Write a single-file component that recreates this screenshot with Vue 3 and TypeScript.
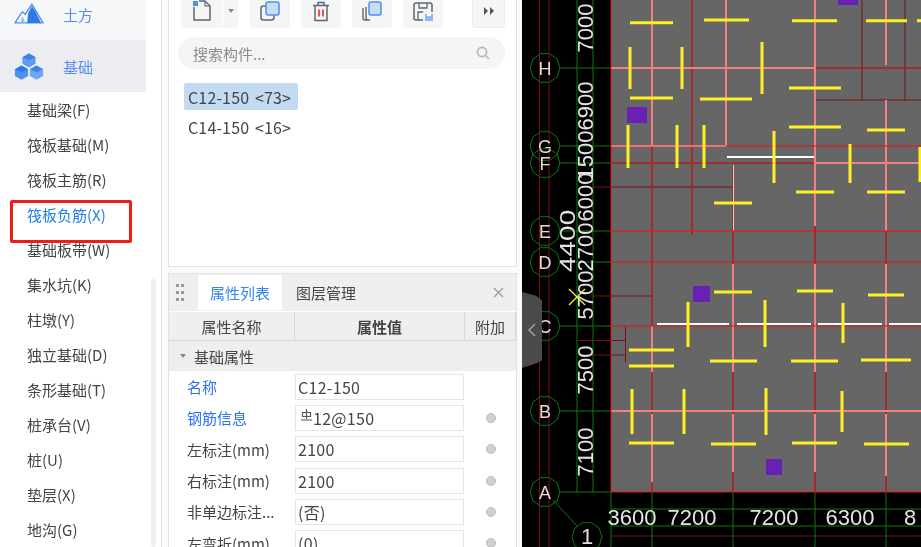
<script setup lang="ts">
type Row = { label: string; value: string; link?: boolean; dot?: boolean }

const menu = [
  '基础梁(F)', '筏板基础(M)', '筏板主筋(R)', '筏板负筋(X)', '基础板带(W)', '集水坑(K)', '柱墩(Y)',
  '独立基础(D)', '条形基础(T)', '桩承台(V)', '桩(U)', '垫层(X)', '地沟(G)',
]
const activeMenu = '筏板负筋(X)'

const rows: Row[] = [
  { label: '名称', value: 'C12-150', link: true },
  { label: '钢筋信息', value: '12@150', link: true, dot: true },
  { label: '左标注(mm)', value: '2100', dot: true },
  { label: '右标注(mm)', value: '2100', dot: true },
  { label: '非单边标注...', value: '(否)', dot: true },
  { label: '左弯折(mm)', value: '(0)', dot: true },
]

// drawing data in page px, the svg group shifts it by the canvas left edge
const X0 = 522
const hBars: number[][] = [
  [630, 673, 22.7], [704, 749, 20], [792, 837, 20.7], [866, 907, 20.7], [917, 921, 20.7],
  [789, 841, 88], [630, 673, 98], [700, 752, 99], [789, 841, 127], [867, 905, 130],
  [796, 834, 192], [867, 905, 192], [714, 752, 203], [714, 752, 292], [797, 833, 291],
  [868, 904, 295], [629, 674, 350], [629, 674, 366], [710, 757, 361], [791, 838, 361],
  [861, 911, 360], [629, 674, 443], [711, 756, 444], [792, 837, 443], [864, 909, 444],
]
const vBars: number[][] = [
  [630, 47, 89], [682, 47, 89], [762, 42, 94], [628, 125, 168], [677, 125, 168], [704, 125, 168],
  [774, 131, 183], [850, 144, 183], [920, 147, 182], [688, 302, 347], [765, 300, 347], [843, 303, 343],
  [632, 389, 434], [684, 389, 434], [766, 388, 435], [842, 391, 432],
]
const purple: number[][] = [[627, 107, 20, 16], [693, 286, 17, 16], [766, 459, 16, 16], [838, -4, 20, 9]]

const pink: number[][] = [
  [652, 0, 652, 146], [726, 0, 726, 146], [815, 0, 815, 226], [886, 0, 886, 65], [886, 100, 886, 231],
  [815, 163, 815, 226], [652, 326, 652, 372], [733, 264, 733, 372],
  [815, 264, 815, 372], [886, 264, 886, 372], [652, 414, 652, 482], [733, 414, 733, 472],
  [815, 414, 815, 472], [886, 414, 886, 476], [611, 68, 815, 68], [815, 163, 921, 163],
  [611, 411, 921, 411],
]
const paleLines: number[][] = [[611, 146, 726, 146]]
const red: number[][] = [
  [611, 146, 921, 146], [611, 231, 921, 231], [611, 262, 921, 262], [611, 326, 921, 326],
  [611, 492, 921, 492], [611, 0, 611, 492],
]
const darkRed: number[][] = [
  [692, 0, 692, 235], [652, 146, 652, 492], [733, 165, 733, 492], [815, 226, 815, 492],
  [886, 231, 886, 492], [611, 163, 815, 163], [815, 68, 921, 68],
]
const dimRed: number[][] = [
  [593, 187, 733, 187], [590, 296, 652, 296], [625.5, 326, 625.5, 363], [578, 340.5, 625, 340.5],
  [578, 355, 625, 355], [539.5, 0, 539.5, 547], [549, 0, 549, 547], [611, 536, 921, 536],
  [815, 100, 921, 100], [862, 0, 862, 100], [905, 0, 905, 100],
]
const green: number[][] = [
  [577, 0, 577, 492], [593, 0, 593, 492], [560, 68, 611, 68], [560, 146, 611, 146], [560, 163, 611, 163],
  [560, 231, 611, 231], [560, 262, 611, 262], [560, 326, 611, 326], [560, 411, 611, 411],
  [560, 492, 611, 492], [611, 492, 611, 547], [652, 492, 652, 547], [733, 492, 733, 547],
  [815, 492, 815, 547], [886, 492, 886, 547], [611, 509, 921, 509], [611, 526, 921, 526],
  [553, 500, 577, 526],
]
const axes: [string, number, number][] = [
  ['H', 545, 68], ['G', 545, 146], ['F', 545, 163], ['E', 545, 231], ['D', 545, 262],
  ['C', 545, 326], ['B', 545, 411], ['A', 545, 492], ['1', 587, 537],
]
const sideDims: [string, number, number][] = [
  ['7000', 593, 28], ['6900', 593, 106], ['1500', 593, 155], ['6000', 593, 197], ['2700', 593, 247],
  ['5700', 593, 295], ['7500', 593, 370], ['7100', 593, 452],
]
const bottomDims: [string, number][] = [['3600', 632], ['7200', 692], ['7200', 774], ['6300', 850], ['8', 910]]

function octagon(cx: number, cy: number, r = 15): string {
  const pts: string[] = []
  for (let i = 0; i < 10; i++) {
    const a = (Math.PI * 2 * i) / 10
    pts.push(`${(cx + r * Math.cos(a)).toFixed(1)},${(cy + r * Math.sin(a)).toFixed(1)}`)
  }
  return pts.join(' ')
}
</script>

<template>
  <div class="page">
    <aside class="sidebar">
      <div class="cat cat-top">
        <svg class="cat-icon" width="30" height="23" viewBox="0 0 32 24">
          <path d="M1 22 L9 10 L12 13 L19 2 L31 22 Z" fill="none" stroke="#4d90f0" stroke-width="1.4" stroke-linejoin="round" />
          <path d="M14 22 L15 12 L19 4 L23 10 L29 22 Z" fill="#2f7ae5" />
          <path d="M7 22 L9 15 L12 22 Z" fill="#8db9f5" />
        </svg>
        <span>土方</span>
      </div>
      <div class="cat cat-active">
        <svg class="cat-icon" width="30" height="29" viewBox="0 0 32 30">
          <path d="M16 1 L23 5 L23 12 L16 16 L9 12 L9 5 Z" fill="#5d9cf2" />
          <path d="M16 8 L23 5 L16 1 L9 5 Z" fill="#3b82ea" />
          <path d="M8 14 L15 18 L15 25 L8 29 L1 25 L1 18 Z" fill="#4e92ef" />
          <path d="M8 21 L15 18 L8 14 L1 18 Z" fill="#2f7ae5" />
          <path d="M24 14 L31 18 L31 25 L24 29 L17 25 L17 18 Z" fill="#6ea8f4" />
          <path d="M24 21 L31 18 L24 14 L17 18 Z" fill="#3b82ea" />
        </svg>
        <span>基础</span>
      </div>
      <ul class="menu">
        <li v-for="item in menu" :key="item" :class="{ active: item === activeMenu }">{{ item }}</li>
      </ul>
      <div class="red-box"></div>
      <div class="scroll-thumb"></div>
    </aside>

    <main class="middle">
      <section class="list-panel">
        <div class="toolbar">
          <div class="tool-group">
            <button class="tool tool-new">
              <svg width="20" height="22" viewBox="0 0 20 22">
                <path d="M2 7 V20 H18 V6 L13 1 H7" fill="none" stroke="#5f6672" stroke-width="1.5" stroke-linejoin="round" />
                <path d="M13 1 V6 H18" fill="none" stroke="#5f6672" stroke-width="1.2" />
                <rect x="1" y="1" width="5" height="5" fill="#4d90f0" />
              </svg>
            </button>
            <button class="tool tool-drop"><i class="caret"></i></button>
          </div>
          <button class="tool">
            <svg width="20" height="20" viewBox="0 0 20 20">
              <rect x="1" y="5" width="13" height="14" rx="2.5" fill="none" stroke="#5f6672" stroke-width="1.5" />
              <rect x="6" y="1" width="13" height="13" rx="2" fill="#c9dcf5" stroke="#4d90f0" stroke-width="1.5" />
            </svg>
          </button>
          <button class="tool">
            <svg width="18" height="21" viewBox="0 0 18 21">
              <path d="M1 4.5 H17 M6 4 V1.5 H12 V4 M3 5 V19.5 H15 V5" fill="none" stroke="#5f6672" stroke-width="1.5" stroke-linejoin="round" />
              <path d="M7 8.5 V15.5 M11 8.5 V15.5" stroke="#e5393b" stroke-width="1.7" />
            </svg>
          </button>
          <button class="tool">
            <svg width="20" height="20" viewBox="0 0 20 20">
              <path d="M5 19 H3 Q1 19 1 17 V7" fill="none" stroke="#5f6672" stroke-width="1.4" />
              <path d="M8 19 H6 Q4 19 4 17 V6" fill="none" stroke="#5f6672" stroke-width="1.4" />
              <rect x="7" y="1" width="12" height="13" rx="2" fill="#c9dcf5" stroke="#4d90f0" stroke-width="1.5" />
            </svg>
          </button>
          <button class="tool">
            <svg width="20" height="20" viewBox="0 0 20 20">
              <path d="M10 19 H3 Q1 19 1 17 V4 Q1 2 3 2 H17 Q19 2 19 4 V11" fill="none" stroke="#5f6672" stroke-width="1.5" />
              <path d="M6 2 V7 H14 V2 M5 19 V11 H10" fill="none" stroke="#5f6672" stroke-width="1.3" />
              <rect x="12" y="13" width="8" height="7" fill="#8db9f5" />
              <rect x="14" y="13" width="4" height="2" fill="#fff" />
            </svg>
          </button>
          <button class="tool tool-more">
            <svg width="10" height="8" viewBox="0 0 10 8"><path d="M0 0 L4 4 L0 8 Z M6 0 L10 4 L6 8 Z" fill="#555" /></svg>
          </button>
        </div>
        <div class="search">
          <span>搜索构件...</span>
          <svg width="14" height="14" viewBox="0 0 14 14">
            <circle cx="6" cy="6" r="4.6" fill="none" stroke="#b5b5b5" stroke-width="1.6" />
            <path d="M9.5 9.5 L13 13" stroke="#b5b5b5" stroke-width="1.6" />
          </svg>
        </div>
        <div class="item selected">C12-150 &lt;73&gt;</div>
        <div class="item">C14-150 &lt;16&gt;</div>
      </section>

      <section class="prop-panel">
        <div class="tabs">
          <svg class="grip" width="8" height="18" viewBox="0 0 8 18">
            <g fill="#9a9a9a">
              <rect x="0" y="0" width="3" height="3" /><rect x="5" y="0" width="3" height="3" />
              <rect x="0" y="7" width="3" height="3" /><rect x="5" y="7" width="3" height="3" />
              <rect x="0" y="14" width="3" height="3" /><rect x="5" y="14" width="3" height="3" />
            </g>
          </svg>
          <div class="tab tab-active">属性列表</div>
          <div class="tab">图层管理</div>
          <svg class="close" width="11" height="11" viewBox="0 0 11 11">
            <path d="M1 1 L10 10 M10 1 L1 10" stroke="#9a9a9a" stroke-width="1.3" />
          </svg>
        </div>
        <div class="thead">
          <div class="th">属性名称</div>
          <div class="th th-bold">属性值</div>
          <div class="th">附加</div>
        </div>
        <div class="group">
          <i class="caret"></i>
          <span>基础属性</span>
        </div>
        <div class="rows">
          <div v-for="row in rows" :key="row.label" class="row">
            <div class="label" :class="{ link: row.link }">{{ row.label }}</div>
            <div class="value">
              <svg v-if="row.label === '钢筋信息'" class="rebar" width="11" height="12" viewBox="0 0 11 12">
                <path d="M5.5 0 V10 M0 11 H11 M1.5 3.5 H9.5 V7.5 H1.5 Z" fill="none" stroke="#555" stroke-width="1.2" />
              </svg>
              {{ row.value }}
            </div>
            <div class="extra"><i v-if="row.dot" class="dot"></i></div>
          </div>
        </div>
      </section>
    </main>

    <div class="canvas">
      <svg width="399" height="547" viewBox="0 0 399 547">
        <g :transform="`translate(${-X0},0)`">
          <rect x="611" y="0" width="310" height="492" fill="#666" />
          <line v-for="(l, i) in dimRed" :key="'dr' + i" :x1="l[0]" :y1="l[1]" :x2="l[2]" :y2="l[3]" stroke="#7a1010" />
          <line v-for="(l, i) in green" :key="'g' + i" :x1="l[0]" :y1="l[1]" :x2="l[2]" :y2="l[3]" stroke="#0c780c" />
          <line v-for="(l, i) in darkRed" :key="'k' + i" :x1="l[0]" :y1="l[1]" :x2="l[2]" :y2="l[3]" stroke="#b01e1e" stroke-width="1.6" />
          <line v-for="(l, i) in pink" :key="'p' + i" :x1="l[0]" :y1="l[1]" :x2="l[2]" :y2="l[3]" stroke="#f48080" stroke-width="2" />
          <line v-for="(l, i) in paleLines" :key="'w' + i" :x1="l[0]" :y1="l[1]" :x2="l[2]" :y2="l[3]" stroke="#e8d0d0" stroke-width="2" />
          <line x1="733.5" y1="165" x2="733.5" y2="231" stroke="#e8c8c8" />
          <line v-for="(l, i) in red" :key="'r' + i" :x1="l[0]" :y1="l[1]" :x2="l[2]" :y2="l[3]" stroke="#f01010" />
          <path d="M727 157 H814 M657 324 H729 M737 324 H811 M818 324 H882 M889 324 H921" stroke="#fff" stroke-width="2" />
          <line v-for="(b, i) in hBars" :key="'h' + i" :x1="b[0]" :y1="b[2]" :x2="b[1]" :y2="b[2]" stroke="#fff022" stroke-width="3" />
          <line v-for="(b, i) in vBars" :key="'v' + i" :x1="b[0]" :y1="b[1]" :x2="b[0]" :y2="b[2]" stroke="#fff022" stroke-width="3" />
          <rect v-for="(p, i) in purple" :key="'u' + i" :x="p[0]" :y="p[1]" :width="p[2]" :height="p[3]" fill="#6a1fb5" />
          <path d="M569 289 L585 305 M585 289 L569 305" stroke="#f5f020" stroke-width="1.4" />
          <g v-for="a in axes" :key="a[0]">
            <polygon :points="octagon(a[1], a[2])" fill="none" stroke="#0c780c" />
            <text :x="a[1]" :y="a[2] + 6.5" class="axis-text" :class="{ 'axis-num': a[0] === '1' }" text-anchor="middle">{{ a[0] }}</text>
          </g>
          <text
            v-for="d in sideDims"
            :key="d[0] + d[2]"
            class="dim-text"
            text-anchor="middle"
            :transform="`translate(${d[1]},${d[2]}) rotate(-90)`"
          >{{ d[0] }}</text>
          <text class="dim-text" text-anchor="middle" transform="translate(575,241) rotate(-90) scale(1.28,1)">4400</text>
          <text v-for="d in bottomDims" :key="d[0] + d[1]" class="dim-text" :x="d[1]" y="525" text-anchor="middle">{{ d[0] }}</text>
        </g>
      </svg>
      <div class="handle">
        <svg width="8" height="14" viewBox="0 0 8 14"><path d="M7 1 L1 7 L7 13" fill="none" stroke="#a8a8a8" stroke-width="1.4" /></svg>
      </div>
    </div>
  </div>
</template>

<style scoped>
.page {
  display: flex;
  width: 921px;
  height: 547px;
  overflow: hidden;
  background: #fff;
  color: #444;
  font-family: "Noto Sans CJK SC", "Noto Sans", sans-serif;
  font-size: 15px;
  filter: blur(0.35px);
}

.sidebar {
  position: relative;
  flex: none;
  width: 162px;
  box-sizing: border-box;
  border-right: 1px solid #e6e6e6;
  overflow: hidden;
}

.cat {
  display: flex;
  align-items: center;
  width: 146px;
  color: #5b8def;
}

.cat span {
  margin-left: 19px;
}

.cat-icon {
  flex: none;
  margin-left: 14px;
}

.cat-top {
  height: 40px;
  background: #f6f7f9;
  align-items: flex-end;
  padding-bottom: 15px;
  box-sizing: border-box;
}

.cat-active {
  height: 52px;
  background: #ecedf1;
}

.menu {
  margin: 0;
  padding: 0;
  list-style: none;
}

.menu li {
  height: 35px;
  line-height: 35px;
  padding-left: 27px;
  white-space: nowrap;
}

.menu li.active {
  color: #1e7ff0;
}

.red-box {
  position: absolute;
  left: 10px;
  top: 200px;
  width: 122px;
  height: 43px;
  box-sizing: border-box;
  border: 3px solid #f01c14;
  border-radius: 2px;
}

.scroll-thumb {
  position: absolute;
  left: 151px;
  top: 279px;
  width: 5px;
  height: 268px;
  border-radius: 3px;
  background: #eeeeee;
}

.middle {
  flex: none;
  display: flex;
  flex-direction: column;
  gap: 6px;
  width: 360px;
  padding: 0 5px 0 6px;
  box-sizing: border-box;
  background: #fbfbfb;
}

.list-panel {
  flex: none;
  height: 267px;
  box-sizing: border-box;
  padding: 0 11px 0 9px;
  background: #fff;
  border: 1px solid #e2e2e2;
  border-top: none;
}

.toolbar {
  display: flex;
  height: 28px;
  padding-left: 3px;
  gap: 11px;
}

.tool {
  display: flex;
  align-items: center;
  justify-content: center;
  width: 40px;
  height: 28px;
  padding: 0 0 6px;
  border: none;
  border-radius: 0 0 4px 4px;
  background: #f5f5f5;
}

.tool-group {
  display: flex;
  gap: 1px;
  margin-right: 1px;
}

.tool-new {
  width: 41px;
  border-radius: 0 0 0 4px;
}

.tool-drop {
  width: 15px;
  border-radius: 0 0 4px 0;
}

.tool-more {
  width: 33px;
  margin-left: 18px;
  border: 1px solid #ececec;
  border-top: none;
}

.caret {
  display: inline-block;
  width: 0;
  height: 0;
  border-left: 3.5px solid transparent;
  border-right: 3.5px solid transparent;
  border-top: 4px solid #8a8a8a;
}

.search {
  display: flex;
  align-items: center;
  justify-content: space-between;
  height: 32px;
  margin-top: 9px;
  padding: 0 15px;
  border-radius: 16px;
  background: #f5f5f5;
  color: #8c8c8c;
}

.item {
  display: flex;
  align-items: center;
  box-sizing: border-box;
  width: 114px;
  height: 27px;
  margin: 14px 0 0 6px;
  padding: 0 0 0 4px;
  border-radius: 2px;
  color: #444;
  font-size: 16px;
  letter-spacing: 0.15px;
  word-spacing: 2px;
  white-space: nowrap;
}

.item + .item {
  margin-top: 3px;
}

.item.selected {
  background: #c3daf3;
}

.prop-panel {
  flex: 1;
  min-height: 0;
  border: 1px solid #e2e2e2;
  border-bottom: none;
  background: #fff;
  overflow: hidden;
}

.tabs {
  display: flex;
  align-items: center;
  height: 37px;
  background: #eeeff1;
}

.grip {
  margin: 0 14px 0 7px;
}

.tab {
  display: flex;
  align-items: center;
  justify-content: center;
  width: 84px;
  height: 35px;
}

.tab + .tab {
  padding-left: 2px;
}

.tab-active {
  background: #fff;
  color: #2f86f0;
}

.close {
  margin: 0 12px 0 auto;
}

.thead {
  display: grid;
  grid-template-columns: 126px 170px 1fr;
  height: 30px;
  box-sizing: border-box;
  border-top: 1px solid #fff;
  background: #eeeff1;
}

.th {
  display: flex;
  align-items: center;
  justify-content: center;
  border-right: 1px solid #d9d9d9;
  border-bottom: 1px solid #d9d9d9;
}

.th-bold {
  font-weight: 700;
}

.group {
  display: flex;
  align-items: center;
  gap: 8px;
  height: 30px;
  padding-left: 11px;
  background: #eeeeef;
}

.row {
  display: grid;
  grid-template-columns: 126px 170px 1fr;
  align-items: center;
  height: 31.3px;
}

.label {
  padding-left: 18px;
  white-space: nowrap;
}

.label.link {
  color: #2f6ff0;
}

.value {
  display: flex;
  align-items: center;
  box-sizing: border-box;
  width: 169px;
  height: 26px;
  padding-left: 2px;
  border: 1px solid #e4e4e4;
  font-size: 16px;
  letter-spacing: 0.3px;
}

.rebar {
  margin: 0 1px 5px 3px;
}

.extra {
  display: flex;
  justify-content: center;
}

.dot {
  display: block;
  width: 10px;
  height: 10px;
  box-sizing: border-box;
  border: 1px solid #bcbcbc;
  border-radius: 50%;
  background: #d0d0d0;
}

.canvas {
  position: relative;
  flex: none;
  width: 399px;
  height: 547px;
  background: #000;
}

.canvas svg {
  display: block;
}

.axis-text {
  fill: #e8d8d8;
  font-family: "Liberation Sans", sans-serif;
  font-size: 18px;
}

.axis-num {
  font-size: 22px;
}

.dim-text {
  fill: #e4e4e4;
  font-family: "Liberation Sans", sans-serif;
  font-size: 22px;
}

.handle {
  position: absolute;
  left: 0;
  top: 292px;
  display: flex;
  align-items: center;
  justify-content: center;
  width: 20px;
  height: 76px;
  background: #4a4a4a;
  clip-path: polygon(0 0, 70% 5%, 100% 11%, 100% 90%, 70% 94%, 0 100%);
}
</style>

<style>
html,
body {
  margin: 0;
  overflow: hidden;
}
</style>
